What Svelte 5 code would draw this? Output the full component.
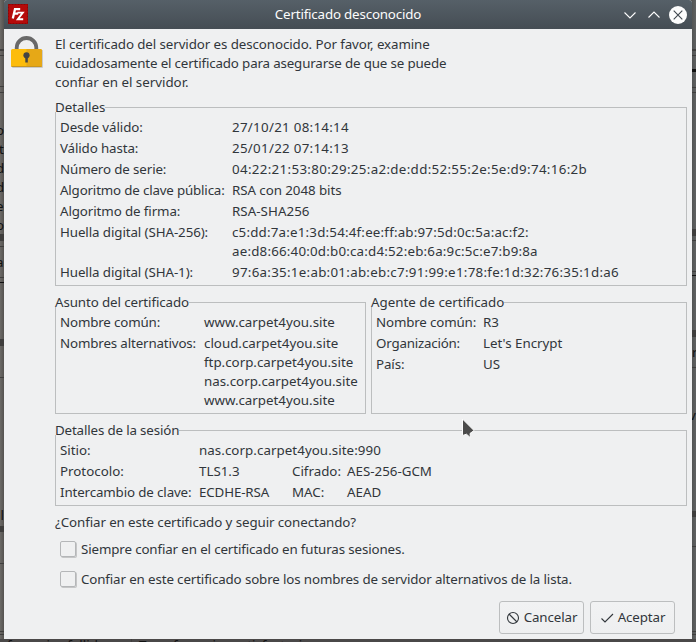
<script>
  const details = [
    ['Desde válido:', ['27/10/21 08:14:14'], -0.08, 0.29],
    ['Válido hasta:', ['25/01/22 07:14:13'], -0.12, 0.29],
    ['Número de serie:', ['04:22:21:53:80:29:25:a2:de:dd:52:55:2e:5e:d9:74:16:2b'], -0.12, 0.33],
    ['Algoritmo de clave pública:', ['RSA con 2048 bits'], -0.17, -0.06],
    ['Algoritmo de firma:', ['RSA-SHA256'], -0.1, 0.05],
    ['Huella digital (SHA-256):', ['c5:dd:7a:e1:3d:54:4f:ee:ff:ab:97:5d:0c:5a:ac:f2:', 'ae:d8:66:40:0d:b0:ca:d4:52:eb:6a:9c:5c:e7:b9:8a'], -0.09, 0.2],
    ['Huella digital (SHA-1):', ['97:6a:35:1e:ab:01:ab:eb:c7:91:99:e1:78:fe:1d:32:76:35:1d:a6'], -0.09, 0.28]
  ];
  const subject = [
    ['Nombre común:', ['www.carpet4you.site'], -0.15, 0],
    ['Nombres alternativos:', ['cloud.carpet4you.site', 'ftp.corp.carpet4you.site', 'nas.corp.carpet4you.site', 'www.carpet4you.site'], -0.14, 0]
  ];
  const issuer = [
    ['Nombre común:', ['R3'], -0.15, 0],
    ['Organización:', ["Let's Encrypt"], -0.2, 0],
    ['País:', ['US'], -0.1, 0]
  ];
  const checks = [
    'Siempre confiar en el certificado en futuras sesiones.',
    'Confiar en este certificado sobre los nombres de servidor alternativos de la lista.'
  ];
</script>

{#snippet rows(list)}
  {#each list as [label, lines, labelTrack, valueTrack]}
    <span class="label" style:letter-spacing="{labelTrack}px">{label}</span>
    <span class="value" style:letter-spacing="{valueTrack}px">{#each lines as line}<span class="line">{line}</span>{/each}</span>
  {/each}
{/snippet}

<div class="screen">
  <svg class="backdrop" width="696" height="642" viewBox="0 0 696 642">
    <defs>
      <linearGradient id="left"><stop offset="0" stop-color="#6c6a67" /><stop offset="1" stop-color="#555350" /></linearGradient>
      <linearGradient id="right"><stop offset="0" stop-color="#525454" /><stop offset="1" stop-color="#606262" /></linearGradient>
    </defs>
    <rect width="696" height="642" fill="#4a4848" />
    <rect width="4" height="639" fill="url(#left)" />
    <rect x="692" width="4" height="639" fill="url(#right)" />
    <g fill="#3f3e3d">
      <rect y="49" width="4" height="2" /><rect y="55" width="4" height="1" /><rect y="86" width="4" height="1" /><rect y="92" width="4" height="1" />
      <rect y="234" width="4" height="7" /><rect y="246" width="4" height="1" /><rect y="277" width="4" height="1" />
      <rect y="339" width="4" height="7" /><rect y="377" width="4" height="1" /><rect y="526" width="4" height="6" />
      <rect y="563" width="4" height="1" /><rect y="631" width="4" height="1" /><rect y="634" width="4" height="1" />
      <rect x="692" y="49" width="4" height="2" /><rect x="692" y="55" width="4" height="1" /><rect x="692" y="87" width="4" height="1" /><rect x="692" y="92" width="4" height="1" />
      <rect x="692" y="229" width="4" height="7" /><rect x="692" y="240" width="4" height="1" /><rect x="692" y="271" width="4" height="1" />
      <rect x="692" y="330" width="4" height="7" /><rect x="692" y="367" width="4" height="1" /><rect x="692" y="511" width="4" height="6" />
      <rect x="692" y="546" width="4" height="1" /><rect x="692" y="631" width="4" height="1" /><rect x="692" y="634" width="4" height="1" />
      <rect x="131" y="639" width="1" height="3" />
    </g>
    <g fill="#111">
      <rect y="282" width="4" height="1" /><rect x="692" y="69" width="4" height="3" /><rect x="692" y="275" width="4" height="1" />
      <text x="-4" y="135">o</text><text x="-1" y="154">t</text><text x="-4" y="173">d</text><text x="-4" y="192">d</text>
      <text x="-4" y="211">e</text><text x="-4" y="230">o</text><text x="-4" y="267">a</text><text x="-7" y="520">al</text>
      <text x="692" y="357">r</text><text x="689" y="420">vi</text>
      <text x="7" y="650">ferencias fallidas</text><text x="139" y="650">Transferencias satisfactorias</text>
    </g>
  </svg>

  <div class="dialog">
    <header>
      <svg class="app" width="20" height="20" viewBox="0 0 20 20">
        <rect width="20" height="20" fill="#b50a0a" />
        <rect x=".5" y=".5" width="19" height="19" fill="none" stroke="#8c0505" stroke-dasharray="2 1" />
        <path d="M4.8 14.6L7 5.2H12.2M6 9.6H10.2" fill="none" stroke="#fff" stroke-width="2.3" />
        <path d="M9.4 8.6H14.8L9.8 15.2H15.2" fill="none" stroke="#fff" stroke-width="1.9" />
      </svg>
      <h1>Certificado desconocido</h1>
      <svg class="controls" width="68" height="20" viewBox="0 0 68 20" fill="none" stroke="#fcfcfc" stroke-width="1.1">
        <path d="M4.5 7.5L10 13L15.5 7.5M28.5 12.5L34 7L39.5 12.5" />
        <circle cx="58" cy="10" r="9" fill="#fcfcfc" stroke="none" />
        <path d="M53.7 5.7L62.3 14.3M62.3 5.7L53.7 14.3" stroke="#3e464d" />
      </svg>
    </header>

    <div class="body">
      <svg class="lock" width="33" height="34" viewBox="0 -1 33 34">
        <rect x="2" y="14" width="31" height="18" rx="1" fill="#c9cacb" />
        <path d="M6.7 15V11.8A9.8 9.8 0 0 1 26.3 11.8V15" fill="none" stroke="#696969" stroke-width="3.8" />
        <rect x="1" y="13" width="31" height="18" rx="1.5" fill="#fdbc0b" />
        <path d="M16.5 13H30.5Q32 13 32 14.5V29.5Q32 31 30.5 31H16.5Z" fill="#e6a817" />
        <path d="M1.5 30.5H31.5" stroke="#c89520" />
        <circle cx="16.5" cy="19.3" r="3.1" fill="#444" /><rect x="15.3" y="20" width="2.5" height="6.5" fill="#444" />
      </svg>

      <main>
        <p class="intro">
          <span class="line first">El certificado del servidor es desconocido. Por favor, examine</span>
          <span class="line second">cuidadosamente el certificado para asegurarse de que se puede</span>
          <span class="line">confiar en el servidor.</span>
        </p>

        <section class="details">
          <h2>Detalles</h2>
          <div class="grid">{@render rows(details)}</div>
        </section>

        <div class="pair">
          <section class="subject">
            <h2>Asunto del certificado</h2>
            <div class="grid">{@render rows(subject)}</div>
          </section>
          <section class="issuer">
            <h2>Agente de certificado</h2>
            <div class="grid">{@render rows(issuer)}</div>
          </section>
        </div>

        <section class="session">
          <h2>Detalles de la sesión</h2>
          <div class="grid">
            <span>Sitio:</span><span class="wide">nas.corp.carpet4you.site:990</span>
            <span>Protocolo:</span><span>TLS1.3</span><span>Cifrado:</span><span>AES-256-GCM</span>
            <span class="tight">Intercambio de clave:</span><span class="tight">ECDHE-RSA</span><span>MAC:</span><span>AEAD</span>
          </div>
        </section>

        <p class="question">¿Confiar en este certificado y seguir conectando?</p>
        {#each checks as text}
          <label class="check"><span class="box"></span>{text}</label>
        {/each}

        <div class="buttons">
          <button>
            <svg width="14" height="14" viewBox="0 0 14 14" fill="none" stroke="#31363b" stroke-width="1.1"><circle cx="7" cy="7" r="5.5" /><path d="M3 3L11 11" /></svg>
            <span>Cancelar</span>
          </button>
          <button>
            <svg width="14" height="14" viewBox="0 0 14 14" fill="none" stroke="#31363b" stroke-width="1.1"><path d="M1.5 7.5L5 11L13 3" /></svg>
            <span>Aceptar</span>
          </button>
        </div>
      </main>
    </div>
  </div>

  <svg class="cursor" width="16" height="24" viewBox="0 0 16 24">
    <path d="M2.5 2V18.5L6.5 17.2L10.5 20.8L10 16.5L14 13.5Z" fill="#4b4b4b" stroke="#fcfcfc" stroke-width="1" />
  </svg>
</div>

<style>
  :global(body) { margin: 0; overflow: hidden; }
  .screen { position: relative; width: 696px; height: 642px; overflow: hidden; box-sizing: border-box; padding: 0 4px 3px; font: 13.333px/19px "Noto Sans", sans-serif; color: #31363b; }
  .backdrop { position: absolute; left: 0; top: 0; }
  .dialog { position: relative; height: 639px; display: flex; flex-direction: column; background: #eff0f1; border-radius: 3px 3px 0 0; overflow: hidden; }
  header { flex: none; height: 29px; box-sizing: border-box; display: flex; align-items: center; padding: 0 4px; background: linear-gradient(#566068, #454d54); }
  h1 { flex: 1; margin: 0; padding-left: 48px; text-align: center; font: inherit; letter-spacing: -0.17px; color: #fcfcfc; }
  .app, .controls { flex: none; }
  .app { margin-top: -1px; }
  .body { flex: 1; display: flex; padding: 6px 5px 0 6px; }
  .lock { flex: none; margin-right: 12px; }
  main { width: 632px; white-space: nowrap; }
  p { margin: 0; }
  section { box-sizing: border-box; border: 1px solid #bcbebf; padding-left: 4px; }
  h2 { width: max-content; height: 9px; line-height: 9px; margin: -5px 0 0 -5px; background: #eff0f1; font-size: inherit; font-weight: 400; }
  .grid { display: grid; row-gap: 2px; align-content: start; padding-top: 6px; }
  .line { display: block; }
  .first { letter-spacing: -0.09px; }
  .second { letter-spacing: -0.15px; }
  .details { margin-top: 15px; height: 179px; }
  .details .grid { grid-template-columns: 172px 1fr; }
  .pair { display: flex; gap: 5px; margin-top: 16px; height: 112px; }
  .subject { width: 311px; }
  .subject h2 { letter-spacing: -0.1px; }
  .subject .grid { grid-template-columns: 144px 1fr; }
  .issuer { width: 316px; }
  .issuer .grid { grid-template-columns: 107px 1fr; }
  .session { margin-top: 16px; height: 76px; }
  .session h2 { letter-spacing: -0.15px; }
  .session .grid { grid-template-columns: 139px 93px 55px 1fr; }
  .tight { letter-spacing: -0.13px; }
  .wide { grid-column: span 3; letter-spacing: 0.06px; }
  .question { margin-top: 7px; letter-spacing: -0.09px; }
  .check { display: flex; align-items: center; height: 19px; margin: 8px 0 11px 5px; letter-spacing: -0.125px; }
  .box { width: 16px; height: 16px; box-sizing: border-box; margin: 0 5px 2px 0; border: 1px solid #b4b6b8; border-radius: 2px; box-shadow: 1px 1px 0 #c5c6c7; }
  .buttons { display: flex; justify-content: flex-end; gap: 6px; margin: 12px 12px 0 0; }
  button { width: 85px; height: 33px; padding: 0; border: 1px solid #bcbebf; border-radius: 3px; background: linear-gradient(#f1f2f3, #eeeff0); color: inherit; font: inherit; letter-spacing: -0.1px; display: flex; align-items: center; justify-content: center; gap: 4px; }
  .cursor { position: absolute; left: 460px; top: 417px; }
</style>
